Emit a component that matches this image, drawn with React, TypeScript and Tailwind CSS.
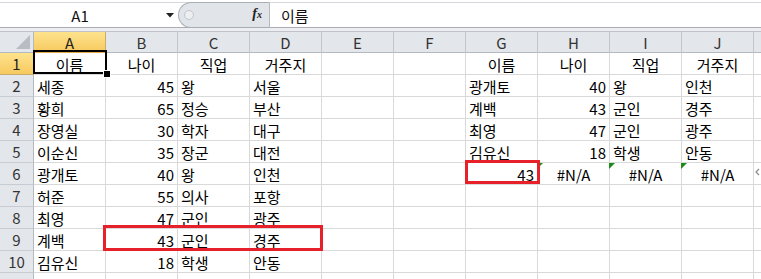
import React from "react";

const FONT = { fontFamily: '"Noto Sans CJK KR", "Noto Sans", sans-serif' };

type Align = "l" | "r" | "c";
type Cell = { t: string; a: Align; err?: boolean };

const cols = ["A", "B", "C", "D", "E", "F", "G", "H", "I", "J", "K"];

const L = (t: string): Cell => ({ t, a: "l" });
const R = (t: string): Cell => ({ t, a: "r" });
const C = (t: string): Cell => ({ t, a: "c" });
const E: Cell = { t: "", a: "l" };
const NA: Cell = { t: "#N/A", a: "c", err: true };

const rows: Cell[][] = [
  [C("이름"), C("나이"), C("직업"), C("거주지"), E, E, C("이름"), C("나이"), C("직업"), C("거주지"), E],
  [L("세종"), R("45"), L("왕"), L("서울"), E, E, L("광개토"), R("40"), L("왕"), L("인천"), E],
  [L("황희"), R("65"), L("정승"), L("부산"), E, E, L("계백"), R("43"), L("군인"), L("경주"), E],
  [L("장영실"), R("30"), L("학자"), L("대구"), E, E, L("최영"), R("47"), L("군인"), L("광주"), E],
  [L("이순신"), R("35"), L("장군"), L("대전"), E, E, L("김유신"), R("18"), L("학생"), L("안동"), E],
  [L("광개토"), R("40"), L("왕"), L("인천"), E, E, R("43"), NA, NA, NA, E],
  [L("허준"), R("55"), L("의사"), L("포항"), E, E, E, E, E, E, E],
  [L("최영"), R("47"), L("군인"), L("광주"), E, E, E, E, E, E, E],
  [L("계백"), R("43"), L("군인"), L("경주"), E, E, E, E, E, E, E],
  [L("김유신"), R("18"), L("학생"), L("안동"), E, E, E, E, E, E, E],
  [E, E, E, E, E, E, E, E, E, E, E],
];

function FormulaBar() {
  return (
    <div className="h-[26px] bg-white border-t border-b border-t-[#d5d8dc] border-b-[#a9adb3] mt-[2px] flex items-stretch" style={FONT}>
      <div className="w-[178px] flex items-center shrink-0">
        <div className="w-[160px] text-center text-[15px] leading-none text-[#111]">A1</div>
        <svg width="8" height="5" viewBox="0 0 8 5" className="ml-[6px]">
          <path d="M0 0 L8 0 L4 4.5 Z" fill="#222" />
        </svg>
      </div>
      <div className="w-[92px] shrink-0 bg-[#e1e4e8] border border-[#a9aeb5] rounded-l-full border-r-[#b7bbc1] flex items-center relative -my-px">
        <div className="ml-[5px] w-[10px] h-[10px] rounded-full bg-[#eceef0] border border-[#c3c7cc]" />
        <span
          className="absolute right-[7px] top-[4px] text-[14px] italic font-bold text-[#222] leading-none"
          style={{ fontFamily: '"Liberation Serif", serif' }}
        >
          f<span className="text-[10px]">x</span>
        </span>
      </div>
      <div className="flex-1 flex items-center pl-[11px] text-[15px] text-[#111] leading-none">이름</div>
    </div>
  );
}

function App() {
  return (
    <div className="w-[761px] h-[279px] overflow-hidden bg-white relative" style={FONT}>
      <FormulaBar />
      <div className="h-[3px] bg-[#eceef1] border-b border-[#c0c4ca] box-content" />
      <div className="grid grid-cols-[34px_repeat(10,72px)_72px] w-[830px]">
        {/* column header row */}
        <div className="h-[21px] bg-[#e3e6ea] border-r border-b border-[#b4b9c0] relative overflow-hidden">
          <svg width="14" height="14" viewBox="0 0 14 14" className="absolute right-[3px] bottom-[3px]">
            <path d="M14 0 L14 14 L0 14 Z" fill="#b9bdc3" />
          </svg>
        </div>
        {cols.map((c) => (
          <div
            key={c}
            className={
              c === "A"
                ? "h-[21px] bg-gradient-to-b from-[#fde38d] to-[#f7c95e] border-r border-b border-r-[#c9ac6a] border-b-[#e0a94a] flex items-center justify-center text-[15px] text-[#222] leading-none"
                : "h-[21px] bg-[#e3e6ea] border-r border-b border-r-[#c3c7cd] border-b-[#b4b9c0] flex items-center justify-center text-[15px] text-[#333] leading-none"
            }
          >
            {c}
          </div>
        ))}
        {rows.map((row, ri) => (
          <React.Fragment key={ri}>
            <div
              className={
                ri === 0
                  ? "h-[22px] bg-gradient-to-b from-[#fde38d] to-[#f7c95e] border-r border-b border-r-[#e0a94a] border-b-[#c9ac6a] flex items-center justify-center text-[15px] text-[#222] leading-none"
                  : "h-[22px] bg-[#e3e6ea] border-r border-b border-r-[#b4b9c0] border-b-[#c8ccd2] flex items-center justify-center text-[15px] text-[#333] leading-none"
              }
            >
              {ri + 1}
            </div>
            {row.map((cell, ci) => (
              <div
                key={ci}
                className={
                  "h-[22px] border-r border-b border-[#d9d9d9] flex items-center text-[15px] leading-none text-black relative whitespace-nowrap " +
                  (cell.a === "l" ? "justify-start pl-[3px]" : cell.a === "r" ? "justify-end pr-[3px]" : "justify-center")
                }
              >
                {cell.err && (
                  <svg width="6" height="6" viewBox="0 0 6 6" className="absolute -left-px top-0">
                    <path d="M0 0 L6 0 L0 6 Z" fill="#1b8a1b" />
                  </svg>
                )}
                <span className="pt-[1px]">{cell.t}</span>
              </div>
            ))}
          </React.Fragment>
        ))}
      </div>

      {/* selection A1 */}
      <div className="absolute left-[33px] top-[50px] w-[74px] h-[24px] border-2 border-black pointer-events-none" />
      <div className="absolute left-[103px] top-[70px] w-[6px] h-[6px] bg-black border border-white box-content" />

      {/* red boxes */}
      <div className="absolute left-[103px] top-[225px] w-[220px] h-[26px] border-[3px] border-[#e8202a] pointer-events-none" />
      <div className="absolute left-[465px] top-[160px] w-[75px] h-[24px] border-[3px] border-[#e8202a] pointer-events-none" />

      {/* error smart tag partial */}
      <svg width="6" height="8" viewBox="0 0 6 8" className="absolute left-[755px] top-[168px]">
        <path d="M4 1 L1 4 L4 7" stroke="#8a8a8a" strokeWidth="1.2" fill="none" />
      </svg>
    </div>
  );
}

export default App;
